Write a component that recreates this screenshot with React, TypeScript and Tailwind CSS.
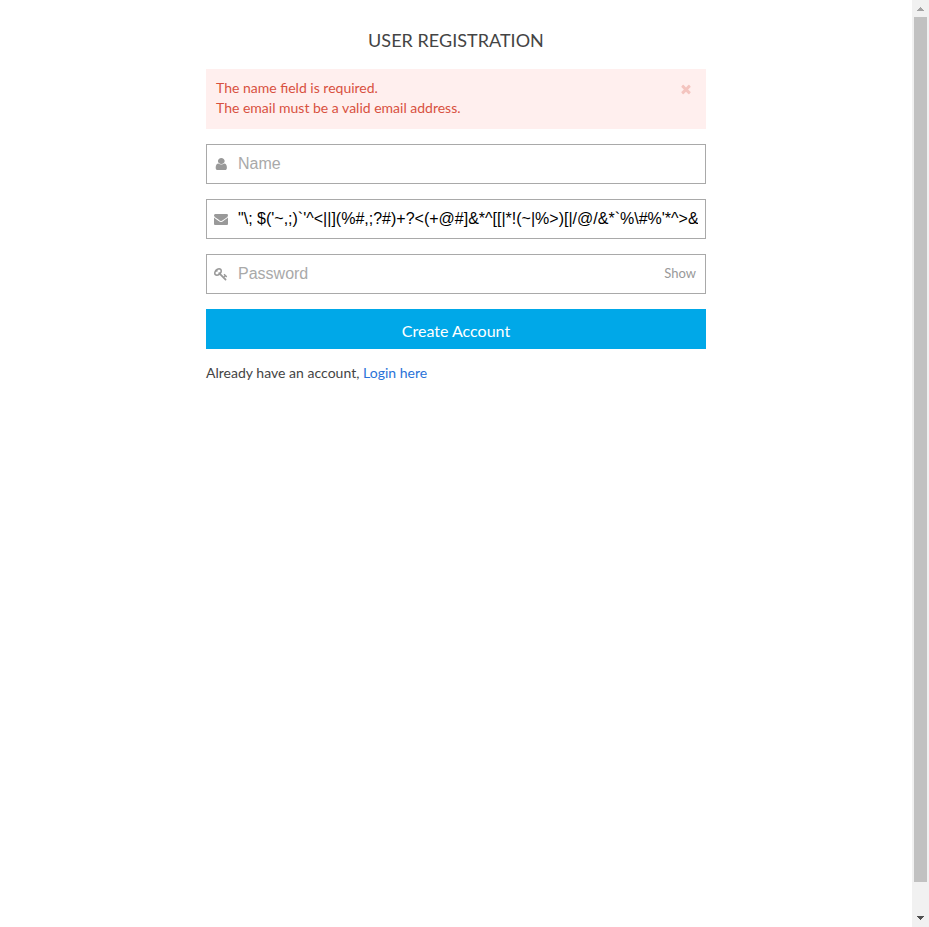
import { useState, type ReactNode } from "react";

const paths = {
  user: "M1536 1399q0 109-62.5 187t-150.5 78h-854q-88 0-150.5-78t-62.5-187q0-85 8.5-160.5t31.5-152 58.5-131 94-89 134.5-34.5q131 128 313 128t313-128q76 0 134.5 34.5t94 89 58.5 131 31.5 152 8.5 160.5zm-256-887q0 159-112.5 271.5t-271.5 112.5-271.5-112.5-112.5-271.5 112.5-271.5 271.5-112.5 271.5 112.5 112.5 271.5z",
  envelope: "M1792 710v794q0 66-47 113t-113 47h-1472q-66 0-113-47t-47-113v-794q44 49 101 87 362 246 497 345 57 42 92.5 65.5t94.5 48 110 24.5h2q51 0 110-24.5t94.5-48 92.5-65.5q170-123 498-345 57-39 100-87zm0-294q0 79-49 151t-122 123q-376 261-468 325-10 7-42.5 31t-54 38.8-52 33.2-57.5 27-50 9h-2q-23 0-50-9t-57.5-27-52-33.2-54-38.8-42.5-31q-91-64-262-182.5t-205-142.5q-62-42-117-115.5t-55-136.5q0-78 41.5-130t118.5-52h1472q65 0 112.5 47t47.5 113z",
  key: "M832 512q0-80-56-136t-136-56-136 56-56 136q0 42 19 83-41-19-83-19-80 0-136 56t-56 136 56 136 136 56 136-56 56-136q0-42-19-83 41 19 83 19 80 0 136-56t56-136zm851 704q0 17-49 66t-66 49q-9 0-28.5-16t-36.5-33-38.5-40-24.5-26l-96 96 220 220q28 28 28 68 0 42-39 81t-81 39q-40 0-68-28l-671-671q-176 131-365 131-163 0-265.5-102.5t-102.5-265.5q0-160 95-313t248-248 313-95q163 0 265.5 102.5t102.5 265.5q0 189-131 365l355 355 96-96q-3-3-26-24.5t-40-38.5-33-36.5-16-28.5q0-17 49-66t66-49q13 0 23 10 6 6 46 44.5t82 79.5 86.5 86 73 78 28.5 41z",
  times: "M1490 1322q0 40-28 68l-136 136q-28 28-68 28t-68-28l-294-294-294 294q-28 28-68 28t-68-28l-136-136q-28-28-28-68t28-68l294-294-294-294q-28-28-28-68t28-68l136-136q28-28 68-28t68 28l294 294 294-294q28-28 68-28t68 28l136 136q28 28 28 68t-28 68l-294 294 294 294q28 28 28 68z",
};

function Icon({ name }: { name: keyof typeof paths }) {
  return (
    <svg viewBox="0 0 1792 1792" className="size-3.5 shrink-0 fill-current">
      <path d={paths[name]} transform={name === "user" ? "translate(-70 0) scale(1.12 1)" : undefined} />
    </svg>
  );
}

interface FieldProps {
  icon: keyof typeof paths;
  type: string;
  placeholder: string;
  value?: string;
  children?: ReactNode;
}

function Field({ icon, type, placeholder, value, children }: FieldProps) {
  return (
    <div className="flex h-10 items-center border border-[#a9a9a9] px-[7px] text-[#999]">
      <Icon name={icon} />
      <input
        type={type}
        placeholder={placeholder}
        defaultValue={value}
        className="ml-[10px] h-6 min-w-0 flex-1 pb-px font-['Liberation_Sans',Arial,sans-serif] text-base text-black outline-none placeholder:text-[#a9a9a9]"
      />
      {children}
    </div>
  );
}

export default function App() {
  const [shown, setShown] = useState(false);
  return (
    <div className="flex h-[927px] bg-white font-[Lato,sans-serif] text-sm leading-5 text-[#444]">
      <main className="flex flex-1 justify-center">
        <form className="flex w-[500px] flex-col" onSubmit={(e) => e.preventDefault()}>
          <h1 className="mt-[29px] text-center text-lg leading-[22px] tracking-[0.03px]">USER REGISTRATION</h1>
          <div className="mt-[18px] flex h-[60px] justify-between bg-[#ffefee] px-[10px] pt-[9px] text-[#d8513f]">
            <div>
              <p>The name field is required.</p>
              <p>The email must be a valid email address.</p>
            </div>
            <button type="button" aria-label="Close" className="mt-[4px] mr-[3px] h-3.5 text-[#f4c4bf]">
              <Icon name="times" />
            </button>
          </div>
          <div className="mt-[15px] flex flex-col gap-[15px]">
            <Field icon="user" type="text" placeholder="Name" />
            <Field
              icon="envelope"
              type="text"
              placeholder="Email"
              value={"\"\\; $('~,;)`'^<||](%#,;?#)+?<(+@#]&*^[[|*!(~|%>)[|/@/&*`%\\#%'*^>&"}
            />
            <Field icon="key" type={shown ? "text" : "password"} placeholder="Password">
              <button type="button" className="mr-[2px] pb-[2px] text-[13px]" onClick={() => setShown(!shown)}>
                Show
              </button>
            </Field>
            <button className="h-10 bg-[#00a8e8] pt-[4px] text-base text-white">Create Account</button>
          </div>
          <p className="mt-[14px] tracking-[0.02px]">
            Already have an account, <a href="#" className="text-[#2a72d8]">Login here</a>
          </p>
        </form>
      </main>
      <div className="flex w-[17px] flex-col items-center bg-[#f1f1f1]">
        <svg viewBox="0 0 17 17" className="h-[17px] w-[17px] fill-[#a3a3a3]" shapeRendering="crispEdges">
          <path d="M5 11h7v-1h-1v-1h-1v-1h-1v-1h-1v1h-1v1h-1v1h-1z" />
        </svg>
        <div className="h-[865px] w-[13px] bg-[#c1c1c1]" />
        <svg viewBox="0 0 17 17" className="mt-auto h-[17px] w-[17px] fill-[#505050]" shapeRendering="crispEdges">
          <path d="M5 6h7v1h-1v1h-1v1h-1v1h-1v-1h-1v-1h-1v-1h-1z" />
        </svg>
      </div>
    </div>
  );
}
